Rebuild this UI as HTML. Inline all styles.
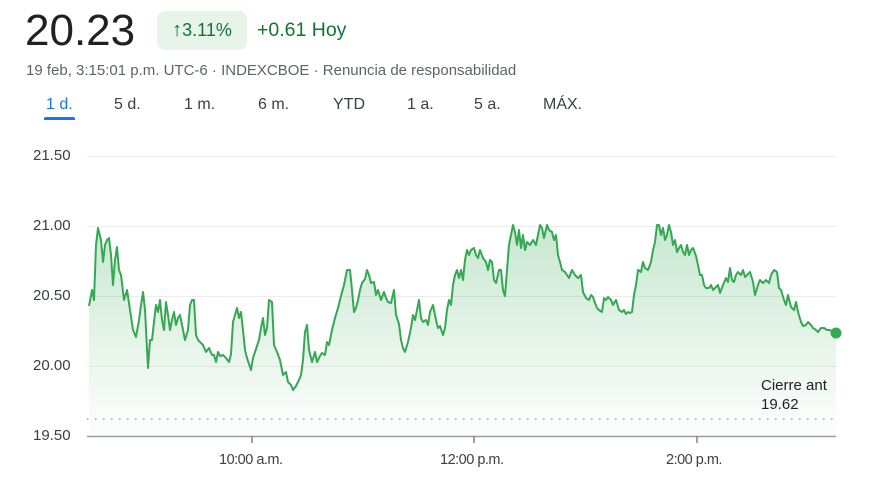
<!DOCTYPE html>
<html><head><meta charset="utf-8"><style>
body{margin:0;width:872px;height:480px;background:#fff;font-family:"Liberation Sans",Arial,sans-serif;position:relative;overflow:hidden}
.a{position:absolute;white-space:nowrap}
.price{left:25px;top:6px;font-size:44px;color:#202124;letter-spacing:0px}
.badge{left:157px;top:11px;width:90px;height:39px;background:#e6f4ea;border-radius:8px;color:#137333;font-size:18px;line-height:39px;text-align:center}
.chg{left:257px;top:19px;font-size:19.5px;color:#137333}
.sub{left:26px;top:62px;font-size:15px;color:#5f6368}
.tab{top:96px;font-size:16px;color:#3c4043}
.tab.on{color:#1a73e8}
.ul{left:44px;top:117px;width:31px;height:3px;background:#1a73e8;border-radius:2px 2px 0 0}
.yl{left:33px;font-size:15px;color:#3c4043}
.xl{top:452px;font-size:14.5px;color:#3c4043;letter-spacing:-0.5px}
</style></head><body>
<div class="a price">20.23</div>
<div class="a badge"><span style="font-size:20px">↑</span>3.11%</div>
<div class="a chg">+0.61 Hoy</div>
<div class="a sub">19 feb, 3:15:01 p.m. UTC-6 · INDEXCBOE · Renuncia de responsabilidad</div>
<div class="a tab on" style="left:46px">1 d.</div>
<div class="a ul"></div>
<div class="a tab" style="left:114px">5 d.</div>
<div class="a tab" style="left:184px">1 m.</div>
<div class="a tab" style="left:258px">6 m.</div>
<div class="a tab" style="left:333px">YTD</div>
<div class="a tab" style="left:407px">1 a.</div>
<div class="a tab" style="left:474px">5 a.</div>
<div class="a tab" style="left:543px">MÁX.</div>
<div class="a yl" style="top:147px">21.50</div>
<div class="a yl" style="top:217px">21.00</div>
<div class="a yl" style="top:287px">20.50</div>
<div class="a yl" style="top:357px">20.00</div>
<div class="a yl" style="top:427px">19.50</div>
<svg class="a" style="left:0;top:0" width="872" height="480">
<defs>
<linearGradient id="g2" x1="0" y1="220" x2="0" y2="425" gradientUnits="userSpaceOnUse"><stop offset="0" stop-color="#34a853" stop-opacity="0.28"/><stop offset="1" stop-color="#34a853" stop-opacity="0.02"/></linearGradient></defs>
<g stroke="#ececec" stroke-width="1"><line x1="87" y1="156.5" x2="836" y2="156.5"/><line x1="87" y1="226.5" x2="836" y2="226.5"/><line x1="87" y1="296.5" x2="836" y2="296.5"/><line x1="87" y1="366.5" x2="836" y2="366.5"/></g>
<polygon id="fill" fill="url(#g2)" points=""/>
<polyline id="ln" fill="none" stroke="#34a853" stroke-width="2" stroke-linejoin="round" points=""/>
<line x1="87" y1="419" x2="836" y2="419" stroke="#9aa0a6" stroke-width="1.5" stroke-dasharray="1.5,6.5"/>
<line x1="87" y1="436.5" x2="836" y2="436.5" stroke="#9aa0a6" stroke-width="1.5"/>
<g stroke="#80868b" stroke-width="1.5"><line x1="252" y1="436" x2="252" y2="443"/><line x1="474" y1="436" x2="474" y2="443"/><line x1="697" y1="436" x2="697" y2="443"/></g>
<circle cx="836" cy="333" r="5.5" fill="#34a853"/>
</svg>
<div class="a" style="left:761px;top:376px;font-size:15px;color:#202124;line-height:19px">Cierre ant<br>19.62</div>
<div class="a xl" style="left:219px">10:00 a.m.</div>
<div class="a xl" style="left:440px">12:00 p.m.</div>
<div class="a xl" style="left:666px">2:00 p.m.</div>
<script>
var p="89,306 92,290 94,300 96,245 98,228 101,240 103,262 105,245 107,240 109,238 111,255 113,285 115,260 117,247 119,270 121,275 124,300 127,290 130,310 133,330 136,337 139,320 141,305 143,292 145,310 148,368 150,340 152,340 154,322 156,305 158,312 160,300 162,320 164,330 166,302 168,315 170,330 172,320 174,312 176,325 178,318 180,315 182,325 185,340 188,330 190,305 192,300 194,300 196,335 198,340 200,342 203,345 206,352 209,348 212,355 214,355 216,362 218,352 220,356 223,355 226,358 229,362 231,354 233,322 235,315 237,308 239,318 241,312 243,330 245,350 247,358 251,370 253,358 257,346 259,340 261,328 263,318 265,335 267,328 269,300 272,302 274,345 277,352 280,360 283,375 286,372 288,382 291,385 293,390 296,386 299,380 301,375 303,360 305,332 307,325 309,350 312,362 315,352 317,362 320,356 322,353 325,355 327,342 329,345 332,330 335,318 338,308 341,296 344,285 347,270 350,270 352,290 354,312 356,308 358,300 360,290 362,283 365,279 367,270 369,275 371,283 374,282 376,295 378,290 381,300 384,292 386,298 388,302 391,303 394,290 396,315 399,324 401,340 403,348 405,352 408,342 411,328 413,315 415,320 417,310 419,300 421,318 423,322 426,320 428,325 430,312 433,305 436,320 438,328 440,326 443,335 445,328 447,310 449,300 451,305 453,285 455,275 457,270 459,278 461,270 463,280 465,260 467,250 469,255 471,250 474,248 476,255 478,258 480,250 483,258 486,262 488,270 490,260 492,262 494,280 496,283 499,270 501,270 503,290 505,296 507,270 509,245 511,235 513,225 515,232 517,245 519,230 521,248 523,235 525,250 527,242 530,245 533,240 536,245 538,235 540,225 542,228 544,238 547,225 549,230 552,232 554,240 556,235 558,255 560,262 562,270 565,272 567,275 569,278 572,270 575,275 578,278 581,275 583,292 586,298 589,300 591,295 593,297 595,303 597,308 599,310 602,312 604,298 606,300 608,297 611,300 613,305 616,300 619,310 622,312 624,310 626,314 628,312 630,313 632,312 634,295 636,285 638,270 641,272 643,262 645,268 648,270 651,262 653,250 655,242 657,225 659,225 661,235 663,228 665,240 667,235 669,225 671,232 673,245 675,240 677,252 679,248 681,245 683,252 685,255 687,245 689,255 691,250 693,248 696,256 698,265 700,275 702,275 704,285 706,288 709,288 711,285 713,290 715,288 718,285 720,293 723,285 726,278 728,282 730,268 732,280 734,282 736,275 738,272 741,275 743,270 745,277 747,275 750,272 753,282 755,295 758,285 760,280 763,283 766,280 769,283 771,275 774,270 777,272 779,288 781,290 784,300 786,305 788,295 791,307 794,310 796,302 798,312 801,322 803,326 806,325 808,322 811,325 813,328 816,330 818,332 821,328 824,328 827,330 830,330 834,333 836,333";
document.getElementById('ln').setAttribute('points',p);
document.getElementById('fill').setAttribute('points',"89,436 "+p+" 836,436");
</script>
</body></html>
